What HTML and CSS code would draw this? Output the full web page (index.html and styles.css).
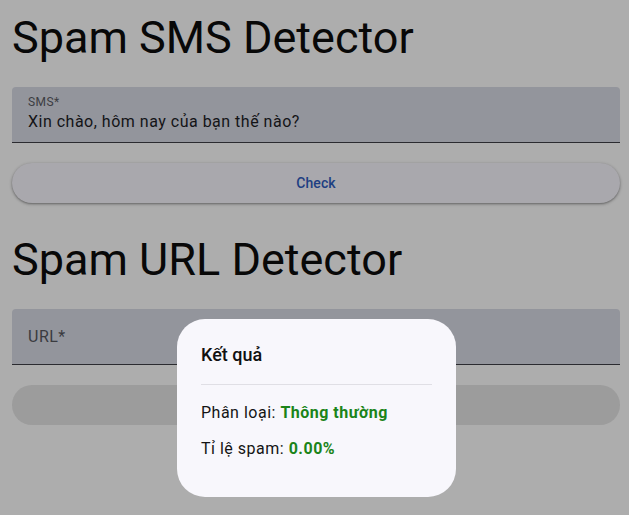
FILE: index.html
```html
<!DOCTYPE html>
<html lang="vi">
<head>
<meta charset="utf-8">
<title>Spam Detector</title>
<link rel="stylesheet" href="styles.css">
</head>
<body>
<main class="page">
  <h1 class="title">Spam SMS Detector</h1>
  <div class="field">
    <span class="field-label small">SMS*</span>
    <span class="field-value">Xin chào, hôm nay của bạn thế nào?</span>
  </div>
  <button class="btn">Check</button>

  <h1 class="title title-2">Spam URL Detector</h1>
  <div class="field field-empty">
    <span class="field-label">URL*</span>
  </div>
  <button class="btn btn-disabled" disabled></button>
</main>

<div class="dialog" role="dialog">
  <div class="dialog-title">Kết quả</div>
  <div class="divider"></div>
  <div class="dialog-body">
    <div class="row">Phân loại: <span class="ok">Thông thường</span></div>
    <div class="row">Tỉ lệ spam: <span class="ok">0.00%</span></div>
  </div>
</div>
</body>
</html>
```

FILE: styles.css
```css
* { box-sizing: border-box; }

html, body {
  margin: 0;
  padding: 0;
  background: #adadad;
  font-family: Roboto, "Noto Sans", sans-serif;
  color: #111;
}

.page {
  display: flex;
  flex-direction: column;
  padding: 12px 9px 0 12px;
}

.title {
  margin: 0;
  font-size: 45px;
  line-height: 52px;
  font-weight: 400;
  color: #080808;
  letter-spacing: 0;
}

.title-2 {
  margin-top: 31px;
}

.field {
  margin-top: 23px;
  height: 56px;
  background: #93959c;
  border-radius: 4px 4px 0 0;
  border-bottom: 1px solid #2b2b30;
  padding: 7px 16px 0;
  display: flex;
  flex-direction: column;
}

.field-label.small {
  font-size: 12px;
  line-height: 16px;
  color: #3c3d42;
  letter-spacing: 0.4px;
}

.field-value {
  font-size: 16px;
  line-height: 24px;
  color: #141417;
  letter-spacing: 0.5px;
}

.field-empty {
  justify-content: center;
  padding-top: 0;
}

.field-empty .field-label {
  font-size: 16px;
  line-height: 24px;
  color: #3a3b40;
  letter-spacing: 0.5px;
}

.btn {
  margin-top: 20px;
  height: 40px;
  border: 0;
  border-radius: 20px;
  background: #a9a8ad;
  box-shadow: 0 1px 2px rgba(0,0,0,0.3), 0 1px 3px 1px rgba(0,0,0,0.12);
  font-family: Roboto, sans-serif;
  font-size: 14px;
  font-weight: 500;
  letter-spacing: 0.1px;
  color: #1e3f82;
}

.btn-disabled {
  background: #9c9c9c;
  box-shadow: none;
}

.dialog {
  position: absolute;
  left: 177px;
  top: 319px;
  width: 279px;
  height: 178px;
  background: #f8f7fc;
  border-radius: 28px;
  padding: 24px 24px 0;
}

.dialog-title {
  font-size: 18px;
  line-height: 24px;
  font-weight: 500;
  color: #111;
}

.divider {
  margin-top: 17px;
  height: 1px;
  background: #e0dfe5;
}

.dialog-body {
  margin-top: 16px;
  display: flex;
  flex-direction: column;
  gap: 12px;
}

.row {
  font-size: 16px;
  line-height: 24px;
  color: #141414;
  letter-spacing: 0.5px;
}

.ok {
  color: #1b8419;
  font-weight: 700;
}
```
